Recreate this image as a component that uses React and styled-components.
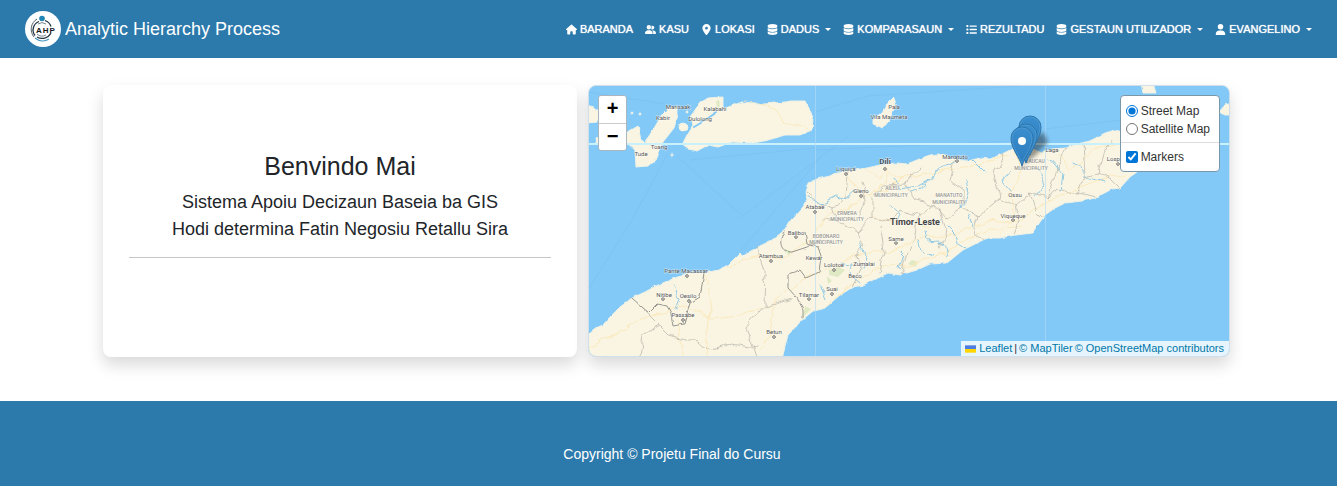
import React from 'react';
import styled, { createGlobalStyle } from 'styled-components';
import { FaHouse, FaUserGroup, FaLocationDot, FaDatabase, FaList, FaUser } from 'react-icons/fa6';

const Global = createGlobalStyle`
  *, *::before, *::after { box-sizing: border-box; }
  body { margin: 0; background: #fff; color: #212529; font-family: "Liberation Sans", Arial, sans-serif; font-size: 16px; line-height: 24px; }
`;

const Page = styled.div`
  min-height: 100vh;
  display: flex;
  flex-direction: column;
`;

const Header = styled.header`
  display: flex;
  align-items: center;
  justify-content: space-between;
  min-height: 58px;
  padding: 0 25px;
  background: #2c7aac;
`;

const Brand = styled.a`
  display: flex;
  align-items: center;
  gap: 4px;
  color: #fff;
  font-size: 18px;
  text-decoration: none;
  white-space: nowrap;
`;

const Nav = styled.nav`
  display: flex;
  align-items: center;
  gap: 12px;
`;

const navItem = `
  display: flex;
  align-items: center;
  gap: 3px;
  padding: 0;
  border: 0;
  background: none;
  color: #fff;
  font: 500 11px/24px "Liberation Sans", Arial, sans-serif;
  text-shadow: 0 0 1px #fff;
  text-decoration: none;
  text-transform: uppercase;
  white-space: nowrap;
  cursor: pointer;
  svg { width: auto; height: 11px; }
`;
const NavLink = styled.a`${navItem}`;
const NavMenu = styled.button`${navItem}`;

const Caret = styled.span`
  margin-left: 3px;
  border: 3px solid transparent;
  border-top-color: #fff;
  border-bottom: 0;
`;

const Main = styled.main`
  display: grid;
  grid-template-columns: minmax(0, 474fr) minmax(0, 642fr);
  gap: 11px;
  padding: 27px 107px 44px 103px;
`;

const Card = styled.section`
  min-height: 272px;
  border-radius: 8px;
  background: #fff;
  box-shadow: 0 8px 16px rgba(0, 0, 0, 0.15);
`;

const Welcome = styled(Card)`
  padding: 66px 26px 24px;
  text-align: center;
`;

const Title = styled.h1`
  margin: 0 0 8px;
  font-size: 25px;
  line-height: 30px;
  font-weight: 400;
`;

const Lead = styled.p`
  margin: 0;
  font-size: 18px;
  line-height: 27px;
`;

const Rule = styled.hr`
  margin: 14px 0 0;
  border: 0;
  border-top: 1px solid #c4c6c8;
`;

const MapCard = styled(Card)`
  position: relative;
  overflow: hidden;
  border: 1px solid #cfe0ea;
  background: #83c9f8;
`;

const MapDrawing = styled.svg`
  position: absolute;
  inset: 0;
  width: 100%;
  height: 100%;
  display: block;
`;

const Zoom = styled.div`
  position: absolute;
  left: 9px;
  top: 9px;
  display: flex;
  flex-direction: column;
  border: 1px solid #a9b6bf;
  border-radius: 3px;
  overflow: hidden;
`;

const ZoomButton = styled.button`
  display: flex;
  align-items: flex-start;
  justify-content: center;
  width: 27px;
  height: 27px;
  padding: 0;
  border: 0;
  background: #fff;
  color: #000;
  font: 700 20px/24px "Liberation Sans", Arial, sans-serif;
  cursor: pointer;
  & + & { border-top: 1px solid #ccc; }
`;

const Layers = styled.form`
  position: absolute;
  right: 9px;
  top: 9px;
  padding: 6px 9px 5px 5px;
  border: 1px solid #7a97aa;
  border-radius: 4px;
  background: #fff;
`;

const Choice = styled.label`
  display: flex;
  align-items: center;
  gap: 3px;
  font-size: 12px;
  line-height: 18px;
  color: #333;
  white-space: nowrap;
  input { width: 12px; height: 12px; margin: 0; accent-color: #0075d8; }
`;

const Divider = styled.div`
  height: 1px;
  margin: 4px -9px 5px -5px;
  background: #ddd;
`;

const Attribution = styled.div`
  position: absolute;
  right: 0;
  bottom: 0;
  display: flex;
  align-items: center;
  gap: 2px;
  padding: 0 5px 0 4px;
  background: rgba(255, 255, 255, 0.8);
  color: #333;
  font-size: 11px;
  line-height: 15px;
  white-space: nowrap;
  a { color: #0078a8; text-decoration: none; }
  svg { margin-right: 3px; vertical-align: -1px; }
`;

const Footer = styled.footer`
  flex: 1;
  padding: 41px 0 21px 7px;
  background: #2c7aac;
  color: #fff;
  font-size: 14px;
  text-align: center;
`;

function Logo() {
  return (
    <svg width="36" height="36" viewBox="0 0 36 36" aria-hidden="true">
      <circle cx="18" cy="18" r="18" fill="#fff" />
      <g fill="none">
        <path d="M12 8A12 12 0 0 0 9 26" stroke="#56616a" />
        <path d="M14 10.500a9 9 0 0 0-4 14M20 9.500a9.500 9.500 0 0 1 6 6M26 22a10 10 0 0 1-14 4" stroke="#263744" strokeWidth="1.300" />
        <path d="M10 27a12 12 0 0 0 14 1" stroke="#4a9abf" strokeWidth="1.300" />
        <path d="M13 13a7 7 0 0 1 8 0M12 23a7 7 0 0 0 9 1" stroke="#78838b" />
      </g>
      <circle cx="17" cy="7.500" r="2.800" fill="#2084b4" />
      <text x="11" y="22" fontSize="8" fontWeight="700" letterSpacing="1" fontFamily="Liberation Sans, sans-serif" fill="#15191d">AHP</text>
    </svg>
  );
}

const links = [
  ['Baranda', FaHouse], ['Kasu', FaUserGroup], ['Lokasi', FaLocationDot],
  ['Dadus', FaDatabase, true], ['Komparasaun', FaDatabase, true], ['Rezultadu', FaList],
  ['Gestaun Utilizador', FaDatabase, true], ['Evangelino', FaUser, true],
];

const land = [
  'M589 334 598 327 603 325 610 317 620 307 632 298 645 292 658 285 675 278 688 273 705 273 718 270 728 265 740 253 742 256 758 247 772 240 785 230 791 220 803 207 807 200 806 193 808 183 817 179 830 176 837 172 850 171 867 168 880 165 897 163 907 164 917 160 930 155 940 154 950 158 967 161 980 158 990 159 1002 154 1012 149 1030 148 1042 153 1052 149 1065 148 1075 145 1092 140 1105 133 1115 130 1135 135 1150 150 1137 172 1130 177 1120 188 1112 189 1095 198 1082 201 1065 203 1055 208 1045 215 1040 222 1033 233 1015 235 1000 238 987 238 973 245 963 250 947 263 930 264 917 270 900 275 888 273 877 278 863 285 853 287 840 295 825 308 813 311 802 320 788 335 785 347 782 359 586 359 586 334Z',
  'M586 105 594 107 599 113 598 122 586 123Z',
  'M596 138 610 134 628 132 638 126 641 140 645 142 653 130 663 113 670 107 678 108 678 115 674 128 663 142 657 158 648 166 636 167 635 150 626 142 612 148 597 145Z',
  'M682 145 688 133 693 125 690 117 700 103 708 98 723 97 723 109 742 102 765 104 785 102 790 101 805 101 810 110 813 118 812 130 800 135 785 135 765 141 752 143 732 142 718 147 708 145 697 151 688 149Z',
  'M894 97 896 105 888 122 883 128 873 124 873 120 882 112 887 104Z',
  'M1141 83 1153 83 1156 93 1143 93Z',
  'M1232 103 1225 105 1219 112 1225 115 1232 115Z',
];

const borders = [
  'M632 298 642 307 649 313 658 304 667 306 671 313 673 326 684 324 690 303 700 297 704 273',
  'M784 232C778 240 780 253 792 252L807 247 820 240',
  'M803 318 803 309 797 298 788 288 788 274 800 270 806 278 819 272 821 256 818 247 807 244 805 232',
];
const districts = [
  'M645 310 660 325 670 335 690 340 712 350 733 343 757 347',
  'M660 325 643 335 640 357M757 246 765 270 764 306 792 298',
  'M764 306 746 328 752 342 757 357M806 193 820 203 832 207 847 198 849 172',
  'M832 207 840 223 859 232 872 218 890 222 901 208 918 216 934 204 946 218 963 207 980 216 1000 199 1016 207 1031 193 1048 198 1057 188 1077 193 1085 176 1099 173',
  'M859 232 865 247 856 257 861 270 852 287M872 218 872 197 884 186 905 185 920 168',
  'M918 216 914 240 907 253 900 275M963 207 963 190 950 181 955 159M1000 199 994 174 1005 154M1048 198 1058 169 1066 148M1077 193 1096 197M1085 176 1083 143M880 225 884 250 880 273M840 223 823 221',
  'M940 210 946 230 940 250M980 216 975 232 984 240M1016 207 1020 220 1012 235M1031 193 1036 210 1042 216M1099 173 1112 180 1120 188M1099 173 1104 155 1112 140M861 180 866 200 859 215M905 185 915 200 934 204',
];
const rivers = [
  'M807 199 824 202 836 196 847 200 856 192M920 186 931 180 935 170 949 165 958 159',
  'M930 180 922 190 911 193M925 231 927 241 940 240 947 256M918 240 921 250 932 255M948 226 955 233 957 244 966 250',
  'M861 242 866 256 862 267M840 261 849 263 848 273 860 283M965 181 968 193 963 207M970 215 975 227M1009 169 1003 181 1011 191M1075 162 1087 176 1104 181M1039 170 1045 184 1037 197M675 285 681 300 677 310',
  'M973 159 985 171M895 179 900 190 917 187M900 268 904 257 899 252M1050 160 1062 174 1060 190M820 284 826 299M890 206 900 214 897 225',
];
const roads = [
  'M588 347 620 332 650 316 685 306 712 318 740 315 771 304 790 288 824 270 850 257 885 251 915 240 960 232 987 222 1020 220 1048 200 1090 183 1125 173',
  'M705 276 711 310 707 357M728 267 756 256 785 258 811 238 830 214 858 202 886 183 889 169',
  'M744 102 775 107 785 121 811 130M774 304 770 335 760 350M850 176 861 194 884 190 901 180 930 173 970 165 1010 154',
  'M865 168 880 180 885 169 903 181M1015 152 1023 173 1010 193 1015 216 1000 236M870 215 896 225 910 220 930 228M1058 151 1070 170 1095 150 1120 145M677 320 683 357M825 307 848 287 881 267 915 263 948 253 977 233 1022 226',
];
const labels = [
  [678, 109, 'Marisaak'], [663, 120, 'Kabir'], [715, 111, 'Kalabahi'], [700, 121, 'Dulolong'], [659, 149, 'Toang'], [641, 156, 'Tude'],
  [894, 109, 'Pala'], [889, 119, 'Vila Maumeta'], [846, 171, 'Liquiçá'], [885, 164, 'Dili', 8], [955, 159, 'Manatuto'], [861, 193, 'Gleno'],
  [815, 209, 'Atabae'], [796, 235, 'Balibo'], [771, 258, 'Atambua'], [814, 260, 'Kewar'], [834, 267, 'Lolotoe'], [864, 266, 'Zumalai'],
  [855, 278, 'Beco'], [832, 291, 'Suai'], [809, 297, 'Tilamar'], [774, 334, 'Betun'], [686, 273, 'Pante Macassar'], [664, 297, 'Nitibe'],
  [688, 298, 'Oesilo'], [683, 317, 'Passabe'], [896, 241, 'Same'], [1015, 197, 'Ossu'], [1013, 218, 'Viqueque'], [1052, 152, 'Laga'], [1119, 161, 'Lospalos'],
  [915, 225, 'Timor-Leste', 9],
];
const regions = [
  [892, 190, 'AILEU'], [891, 197, 'MUNICIPALITY'], [949, 197, 'MANATUTO'], [949, 204, 'MUNICIPALITY'], [847, 215, 'ERMERA'], [847, 221, 'MUNICIPALITY'],
  [826, 238, 'BOBONARO'], [826, 244, 'MUNICIPALITY'], [1035, 163, 'BAUCAU'], [1031, 170, 'MUNICIPALITY'],
];
const towns = [[663, 299], [687, 276], [689, 301], [683, 320], [774, 337], [846, 174], [885, 169], [861, 196], [815, 212], [796, 237], [771, 261], [834, 270], [832, 294], [809, 299], [896, 243], [1013, 220], [1118, 164], [957, 161]];

function Pin({ x, y }) {
  return (
    <g transform={`translate(${x} ${y})`}>
      <path d="M0 0C-2-8-11-17-11-28A11 11 0 0 1 11-28C11-17 2-8 0 0Z" fill="url(#pin)" stroke="#2c75ab" />
      <path d="M0-3C-2-10-10-18-10-28A10 10 0 0 1 10-28C10-18 2-10 0-3Z" fill="none" stroke="#5fa6da" strokeOpacity=".5" />
      <circle cy="-25" r="4" fill="#fff" />
    </g>
  );
}

function TimorMap() {
  return (
    <MapDrawing viewBox="589 86 640 270" preserveAspectRatio="xMidYMid slice" role="img" aria-label="Timor-Leste">
      <defs>
        <linearGradient id="pin" x1="0" y1="0" x2="0" y2="1"><stop stopColor="#3b8fce" /><stop offset="1" stopColor="#2a7abb" /></linearGradient>
        <filter id="soft" x="-50%" y="-50%" width="200%" height="200%"><feGaussianBlur stdDeviation="2" /></filter>
        <filter id="rough" filterUnits="userSpaceOnUse" x="580" y="78" width="660" height="290">
          <feTurbulence type="fractalNoise" baseFrequency="0.07" numOctaves="2" seed="4" />
          <feDisplacementMap in="SourceGraphic" scale="10" xChannelSelector="R" yChannelSelector="G" />
        </filter>
        <filter id="shore" filterUnits="userSpaceOnUse" x="580" y="78" width="660" height="290">
          <feTurbulence type="fractalNoise" baseFrequency="0.12" numOctaves="2" seed="9" />
          <feDisplacementMap in="SourceGraphic" scale="3" xChannelSelector="R" yChannelSelector="G" />
        </filter>
      </defs>
      <g fill="none" stroke="#74b8e8" strokeOpacity=".35">
        <path d="M588 290 632 220 668 153M677 156 740 214M588 92 665 104M690 160 815 148M740 218 850 135M815 150 1012 141 1045 137M815 112 868 96 1020 86M1045 129 1122 120M741 250 820 158" />
      </g>
      <g fill="#f9f5e2" stroke="#eef1e5" strokeLinejoin="round" filter="url(#shore)">
        {land.map((d) => <path key={d} d={d} />)}
        <circle cx="683" cy="127" r="4" /><circle cx="672" cy="155" r="1" /><circle cx="632" cy="113" r="1" /><circle cx="640" cy="114" r="1" /><circle cx="687" cy="112" r="1" />
      </g>
      <g fill="#d8e7bd" opacity=".8">
        <path d="M908 264 912 260 919 262 915 267ZM829 270 839 267 845 270 838 277 829 275ZM805 306 811 309 803 317ZM784 249 791 251 789 256ZM827 276 832 281 828 284ZM716 101 719 100 720 107 717 107Z" />
      </g>
      <g fill="none" strokeLinejoin="round" strokeLinecap="round" filter="url(#rough)">
        {roads.map((d) => <path key={d} d={d} stroke="#fbe9bd" />)}
        {districts.map((d) => <path key={d} d={d} stroke="#b9b7ae" strokeOpacity=".75" />)}
        {rivers.map((d) => <path key={d} d={d} stroke="#93c9e4" />)}
      </g>
      <g fill="none" strokeLinejoin="round" strokeLinecap="round" filter="url(#shore)">
        {borders.map((d) => <path key={d} d={d} stroke="#96958e" />)}
        <path d="M694 127 704 121 717 112" stroke="#83c9f8" strokeWidth="2" />
      </g>
      <path d="M588 144H1230" stroke="#c8f1fb" strokeWidth="2" />
      <path d="M815.500 85V357M1045.500 85V357" stroke="#b4dcf7" strokeOpacity=".6" />
      <g fill="#fff" stroke="#6b6a66">
        {towns.map(([x, y]) => <circle key={`${x}-${y}`} cx={x} cy={y} r="1.300" />)}
      </g>
      <g fontFamily="Roboto, Liberation Sans, sans-serif" textAnchor="middle" stroke="#fff" strokeOpacity=".6" paintOrder="stroke">
        {labels.map(([x, y, name, size = 6]) => (
          <text key={name} x={x} y={y} fontSize={size} fontWeight={size > 7 ? 700 : 400} fill={size > 8 ? '#444' : '#555'}>{name}</text>
        ))}
        {regions.map(([x, y, name]) => <text key={`${name}-${x}`} x={x} y={y} fontSize="5" fontWeight="500" fill="#98968f">{name}</text>)}
      </g>
      <path d="M1022 166 1034 137 1043 132 1048 142 1037 154Z" fill="#000" opacity=".4" filter="url(#soft)" />
      <Pin x={1030} y={155} />
      <Pin x={1026} y={163} />
      <Pin x={1022} y={166} />
    </MapDrawing>
  );
}

export default function App() {
  return (
    <Page>
      <Global />
      <Header>
        <Brand href="#"><Logo />Analytic Hierarchy Process</Brand>
        <Nav>
          {links.map(([name, Icon, menu]) => menu
            ? <NavMenu key={name} type="button"><Icon />{name}<Caret /></NavMenu>
            : <NavLink key={name} href="#"><Icon />{name}</NavLink>)}
        </Nav>
      </Header>
      <Main>
        <Welcome>
          <Title>Benvindo Mai</Title>
          <Lead>Sistema Apoiu Decizaun Baseia ba GIS</Lead>
          <Lead>Hodi determina Fatin Negosiu Retallu Sira</Lead>
          <Rule />
        </Welcome>
        <MapCard>
          <TimorMap />
          <Zoom>
            <ZoomButton type="button" aria-label="Zoom in">+</ZoomButton>
            <ZoomButton type="button" aria-label="Zoom out">−</ZoomButton>
          </Zoom>
          <Layers>
            <Choice><input type="radio" name="base" defaultChecked />Street Map</Choice>
            <Choice><input type="radio" name="base" />Satellite Map</Choice>
            <Divider />
            <Choice><input type="checkbox" defaultChecked />Markers</Choice>
          </Layers>
          <Attribution>
            <a href="#leaflet">
              <svg width="11" height="8" viewBox="0 0 12 8" aria-hidden="true"><path fill="#4c7be1" d="M0 0h12v4H0z" /><path fill="#ffd500" d="M0 4h12v4H0z" /></svg>
              Leaflet
            </a>
            <span>|</span>
            <a href="#maptiler">© MapTiler</a>
            <a href="#osm">© OpenStreetMap contributors</a>
          </Attribution>
        </MapCard>
      </Main>
      <Footer>Copyright © Projetu Final do Cursu</Footer>
    </Page>
  );
}
